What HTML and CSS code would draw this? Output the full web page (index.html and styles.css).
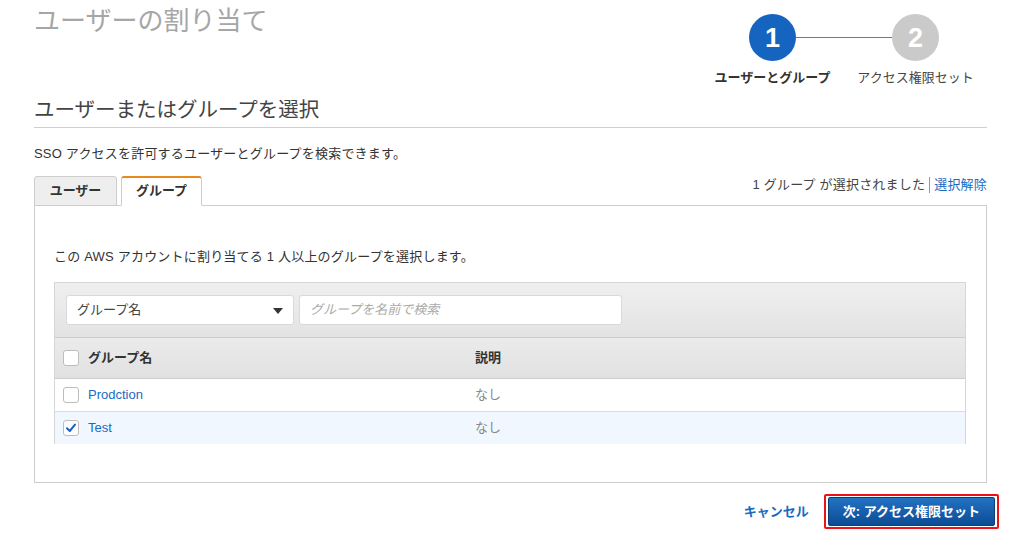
FILE: index.html
```html
<!DOCTYPE html>
<html lang="ja">
<head>
<meta charset="utf-8">
<title>ユーザーの割り当て</title>
<link rel="stylesheet" href="styles.css">
</head>
<body>
<div class="page">
  <header class="top">
    <h1 class="title">ユーザーの割り当て</h1>
    <ol class="stepper">
      <li class="step active"><span class="circle">1</span><span class="step-label">ユーザーとグループ</span></li>
      <li class="step"><span class="circle">2</span><span class="step-label">アクセス権限セット</span></li>
    </ol>
  </header>

  <h2 class="section-title">ユーザーまたはグループを選択</h2>
  <p class="desc">SSO アクセスを許可するユーザーとグループを検索できます。</p>

  <div class="tabbar">
    <div class="tabs">
      <div class="tab">ユーザー</div>
      <div class="tab active">グループ</div>
    </div>
    <div class="selection">1 グループ が選択されました<span class="sep"></span><a class="link" href="#">選択解除</a></div>
  </div>

  <div class="panel">
    <p class="panel-text">この AWS アカウントに割り当てる 1 人以上のグループを選択します。</p>
    <div class="table">
      <div class="filter">
        <div class="select">グループ名<span class="caret"></span></div>
        <div class="search">グループを名前で検索</div>
      </div>
      <div class="row head">
        <div class="cell c1"><span class="cb"></span>グループ名</div>
        <div class="cell c2">説明</div>
      </div>
      <div class="row">
        <div class="cell c1"><span class="cb"></span><a class="link" href="#">Prodction</a></div>
        <div class="cell c2 muted">なし</div>
      </div>
      <div class="row selected">
        <div class="cell c1"><span class="cb checked"><svg viewBox="0 0 14 14" width="14" height="14"><path d="M3 7.2 L5.8 10 L11 3.6" fill="none" stroke="#1a63c0" stroke-width="2" stroke-linecap="round" stroke-linejoin="round"/></svg></span><a class="link" href="#">Test</a></div>
        <div class="cell c2 muted">なし</div>
      </div>
    </div>
  </div>

  <footer class="actions">
    <a class="cancel" href="#">キャンセル</a>
    <div class="highlight"><button class="primary">次: アクセス権限セット</button></div>
  </footer>
</div>
</body>
</html>
```

FILE: styles.css
```css
* { box-sizing: border-box; }
body {
  margin: 0;
  background: #fff;
  color: #444;
  font-family: "Liberation Sans", "Noto Sans CJK JP", sans-serif;
  font-size: 13px;
  line-height: 18px;
}
.page { padding: 0 37px 0 34px; }
a { text-decoration: none; }
.link { color: #1a6ac2; }

.top {
  display: flex;
  justify-content: space-between;
  align-items: flex-start;
  height: 87px;
}
.title {
  margin: 6px 0 0;
  font-size: 26px;
  line-height: 30px;
  font-weight: normal;
  color: #a6a6a6;
}
.stepper {
  position: relative;
  list-style: none;
  margin: 0;
  padding: 14px 0 0;
  display: grid;
  grid-template-columns: 143px 143px;
}
.stepper::before {
  content: "";
  position: absolute;
  left: 95px;
  width: 96px;
  top: 37px;
  height: 1px;
  background: #7a7a7a;
}
.step {
  display: flex;
  flex-direction: column;
  align-items: center;
}
.circle {
  position: relative;
  width: 47px;
  height: 47px;
  border-radius: 50%;
  background: #cacaca;
  color: #fff;
  font-weight: bold;
  font-size: 27px;
  display: flex;
  align-items: center;
  justify-content: center;
}
.step.active .circle { background: #1565c0; }
.step-label {
  margin-top: 8px;
  font-size: 13px;
  color: #444;
}
.step.active .step-label { font-weight: bold; color: #333; }

.section-title {
  margin: 11px 0 0;
  padding-bottom: 5px;
  font-size: 20.5px;
  line-height: 24px;
  font-weight: normal;
  color: #444;
  border-bottom: 1px solid #cfcfcf;
}
.desc {
  margin: 17px 0 0;
  color: #333;
  letter-spacing: 0.2px;
}

.tabbar {
  margin-top: 13px;
  display: flex;
  justify-content: space-between;
  align-items: flex-end;
  position: relative;
  z-index: 1;
}
.tabs { display: flex; gap: 4px; }
.tab {
  height: 30px;
  margin-bottom: -1px;
  padding: 5px 0 0;
  text-align: center;
  font-weight: bold;
  color: #333;
  background: #eeeeee;
  border: 1px solid #cdcdcd;
  border-radius: 3px 3px 0 0;
  width: 83px;
}
.tab.active {
  width: 81px;
  background: #fff;
  border-top: 2px solid #e8891d;
  border-bottom-color: #fff;
  padding-top: 4px;
}
.selection {
  align-self: flex-start;
  color: #444;
  display: flex;
  align-items: center;
  letter-spacing: 0.2px;
}
.sep {
  display: inline-block;
  width: 1px;
  height: 16px;
  background: #999;
  margin: 0 4px 0 4px;
}

.panel {
  border: 1px solid #cdcdcd;
  height: 278px;
  padding: 42px 20px 0 19px;
}
.panel-text { margin: 0; color: #333; letter-spacing: 0.2px; }
.table {
  margin-top: 16px;
  border: 1px solid #d6d6d6;
  border-bottom: none;
}
.filter {
  height: 55px;
  padding: 12px 11px 0;
  display: flex;
  gap: 5px;
  background: linear-gradient(#efefef, #e3e3e3);
  border-bottom: 1px solid #cdcdcd;
}
.select, .search {
  height: 30px;
  background: #fff;
  border: 1px solid #d9d9d9;
  border-radius: 3px;
  padding: 5px 10px 0;
}
.select {
  width: 228px;
  position: relative;
  color: #444;
}
.caret {
  position: absolute;
  right: 10px;
  top: 12px;
  width: 0;
  height: 0;
  border-left: 5px solid transparent;
  border-right: 5px solid transparent;
  border-top: 6px solid #333;
}
.search {
  width: 323px;
  color: #aaa;
  font-style: italic;
}
.row {
  display: flex;
  height: 33px;
  align-items: center;
  border-bottom: 1px solid #dcdcdc;
}
.row.head {
  height: 41px;
  background: linear-gradient(#ebebeb, #e1e1e1);
  border-bottom: 1px solid #cdcdcd;
  font-weight: bold;
  color: #333;
}
.row.selected {
  background: #f0f7fe;
  border-bottom: none;
  height: 32px;
}
.cell { display: flex; align-items: center; }
.c1 { width: 420px; padding-left: 8px; }
.c2 { flex: 1; }
.muted { color: #888; }
.cb {
  width: 16px;
  height: 16px;
  border: 1px solid #bdbdbd;
  border-radius: 3px;
  background: #fff;
  margin-right: 9px;
  display: inline-flex;
  align-items: center;
  justify-content: center;
}
.cb svg { display: block; }

.actions {
  margin-top: 11px;
  margin-right: -12px;
  display: flex;
  justify-content: flex-end;
  align-items: center;
}
.cancel {
  color: #1a6ac2;
  font-weight: bold;
  margin-right: 15px;
}
.highlight {
  border: 2px solid #ee1118;
  padding: 1px 2px;
  border-radius: 2px;
}
.primary {
  display: block;
  height: 29px;
  padding: 0 14px;
  border: 1px solid #0c3f78;
  border-radius: 2px;
  background: linear-gradient(#2272c3, #0c4c95);
  color: #fff;
  font-family: inherit;
  font-size: 13px;
  font-weight: bold;
  line-height: 18px;
}
```
